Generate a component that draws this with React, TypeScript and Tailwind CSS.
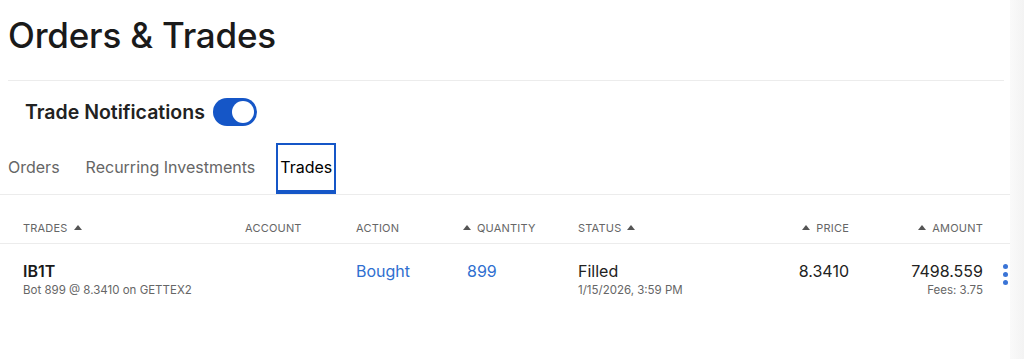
function SortUp() {
  return (
    <svg width="8" height="5" viewBox="0 0 8 5" className="inline-block">
      <path d="M4 0 L8 5 L0 5 Z" fill="#555" />
    </svg>
  );
}

function Toggle({ on }: { on: boolean }) {
  return (
    <button
      aria-pressed={on}
      className={`relative w-[44px] h-[28px] rounded-full ${on ? 'bg-[#1556c7]' : 'bg-gray-300'}`}
    >
      <span className="absolute right-[3px] top-[3px] w-[22px] h-[22px] rounded-full bg-white" />
    </button>
  );
}

const cols = 'grid grid-cols-[222px_111px_107px_115px_140px_131px_134px_27px] pl-[23px]';

export default function App() {
  return (
    <div
      className="flex w-[1024px] h-[359px] bg-white text-[#1a1a1a] overflow-hidden"
      style={{ fontFamily: 'Inter, "Noto Sans", sans-serif' }}
    >
      <div className="w-[1010px] shrink-0">
        <div className="px-[8px] pt-[13px]">
          <h1 className="text-[35px] leading-[44px] font-medium tracking-[-0.2px] pb-[23px] border-b border-[#ececec] mr-[-2px]">
            Orders &amp; Trades
          </h1>
        </div>

        <div className="flex items-center gap-[8px] pl-[25px] pt-[17px]">
          <span className="text-[19.5px] font-semibold leading-[28px] text-[#222]">Trade Notifications</span>
          <Toggle on />
        </div>

        <div className="flex items-stretch h-[52px] mt-[17px] border-b border-[#ececec] pl-[8px]">
          <div className="flex items-center pb-[3px] text-[16px] text-[#666] pr-[26px]">Orders</div>
          <div className="flex items-center pb-[3px] text-[16px] text-[#666] pr-[21px]">Recurring Investments</div>
          <div className="flex items-center pb-[2px] text-[16px] text-black px-[2px] border-2 border-b-4 border-[#1556c7]">
            Trades
          </div>
        </div>

        <div className={`${cols} h-[49px] items-end pb-[7px] border-b border-[#ececec] text-[11px] text-[#666] tracking-[0.2px]`}>
          <div className="flex items-center gap-[6px]">TRADES <SortUp /></div>
          <div>ACCOUNT</div>
          <div>ACTION</div>
          <div className="flex items-center gap-[6px]"><SortUp /> QUANTITY</div>
          <div className="flex items-center gap-[6px]">STATUS <SortUp /></div>
          <div className="flex items-center justify-end gap-[6px]"><SortUp /> PRICE</div>
          <div className="flex items-center justify-end gap-[6px]"><SortUp /> AMOUNT</div>
          <div />
        </div>

        <div className={`${cols} pt-[17px]`}>
          <div>
            <div className="text-[16px] font-semibold leading-[20px]">IB1T</div>
            <div className="text-[11.5px] text-[#666] leading-[18px]">Bot 899 @ 8.3410 on GETTEX2</div>
          </div>
          <div />
          <div className="text-[16px] text-[#2f6fd0] leading-[20px]">Bought</div>
          <div className="text-[16px] text-[#2f6fd0] leading-[20px] pl-[4px]">899</div>
          <div>
            <div className="text-[16px] leading-[20px] text-[#222]">Filled</div>
            <div className="text-[11.5px] text-[#666] leading-[18px]">1/15/2026, 3:59 PM</div>
          </div>
          <div className="text-[16px] leading-[20px] text-right text-[#222]">8.3410</div>
          <div className="text-right">
            <div className="text-[16px] leading-[20px] text-[#222]">7498.559</div>
            <div className="text-[11.5px] text-[#666] leading-[18px]">Fees: 3.75</div>
          </div>
          <div className="flex justify-end pt-[3px]">
            <div className="flex flex-col gap-[3px] pr-[2px]">
              <span className="w-[5px] h-[5px] rounded-full bg-[#3a74d6]" />
              <span className="w-[5px] h-[5px] rounded-full bg-[#3a74d6]" />
              <span className="w-[5px] h-[5px] rounded-full bg-[#3a74d6]" />
            </div>
          </div>
        </div>
      </div>
      <div className="flex-1 bg-gradient-to-r from-[#fafafa] to-[#f3f3f3]" />
    </div>
  );
}
